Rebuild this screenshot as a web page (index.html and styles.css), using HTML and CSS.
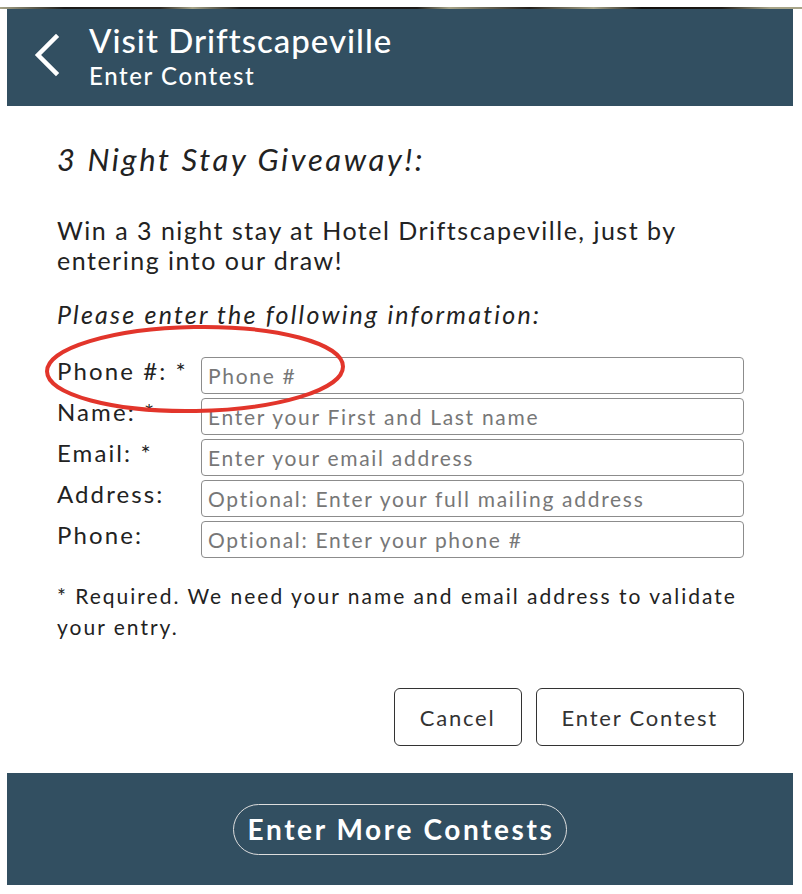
FILE: index.html
```html
<!DOCTYPE html>
<html lang="en">
<head>
    <meta charset="UTF-8">
    <meta name="viewport" content="width=device-width, initial-scale=1.0">
    <title>Enter Contest</title>
    <link rel="stylesheet" href="styles.css">
</head>
<body>
    <div class="page">
        <div class="top-strip"></div>

        <header class="header">
            <a href="#" class="back-link" aria-label="Back">
                <svg width="26" height="44" viewBox="0 0 26 44">
                    <polyline points="22,4 4,22 22,40" fill="none" stroke="#fff" stroke-width="4.5" stroke-linecap="square"/>
                </svg>
            </a>
            <div class="header-titles">
                <h1>Visit Driftscapeville</h1>
                <div class="subtitle">Enter Contest</div>
            </div>
        </header>

        <main class="content">
            <h2>3 Night Stay Giveaway!:</h2>
            <p class="intro">Win a 3 night stay at Hotel Driftscapeville, just by entering into our draw!</p>
            <p class="prompt">Please enter the following information:</p>

            <form class="entry-form" action="#" method="post">
                <svg class="highlight" width="310" height="96" viewBox="0 0 310 96">
                    <ellipse cx="155" cy="48" rx="148" ry="42" fill="none" stroke="#e2352b" stroke-width="4" transform="rotate(-1 155 48)"/>
                </svg>
                <label for="phone-req">Phone #: *</label>
                <input type="text" id="phone-req" placeholder="Phone #">
                <label for="name">Name: *</label>
                <input type="text" id="name" placeholder="Enter your First and Last name">
                <label for="email">Email: *</label>
                <input type="text" id="email" placeholder="Enter your email address">
                <label for="address">Address:</label>
                <input type="text" id="address" placeholder="Optional: Enter your full mailing address">
                <label for="phone">Phone:</label>
                <input type="text" id="phone" placeholder="Optional: Enter your phone #">
            </form>

            <p class="note">* Required. We need your name and email address to validate your entry.</p>

            <div class="actions">
                <button type="button" class="btn">Cancel</button>
                <button type="submit" class="btn">Enter Contest</button>
            </div>
        </main>

        <footer class="footer">
            <a href="#" class="pill">Enter More Contests</a>
        </footer>
    </div>
</body>
</html>
```

FILE: styles.css
```css
body {
    margin: 0;
    background-color: #fff;
    font-family: Lato, "Noto Sans", sans-serif;
    color: #222;
}

.page {
    margin: 0 9px 0 7px;
}

.top-strip {
    height: 2px;
    margin: 7px -9px 0 -7px;
    background: linear-gradient(90deg, #a7a488 0%, #1a1a18 8%, #2a2620 20%, #a7a488 24%, #171614 30%, #1c1a17 52%, #a7a488 56%, #211d18 66%, #a9a68a 74%, #120f0c 80%, #1d1a15 90%, #a7a488 96%);
}

.header {
    background-color: #324f61;
    height: 97px;
    display: flex;
    align-items: center;
    color: #fff;
}

.back-link {
    display: flex;
    margin: 0 29px 0 27px;
    padding-bottom: 6px;
}

.header-titles {
    padding-bottom: 2px;
}

.header-titles h1 {
    margin: 0;
    font-size: 33px;
    font-weight: 500;
    line-height: 36px;
    letter-spacing: 1px;
}

.header-titles .subtitle {
    margin-top: 3px;
    font-size: 24px;
    font-weight: 500;
    line-height: 30px;
    letter-spacing: 1.6px;
}

.content {
    padding: 35px 49px 27px 50px;
}

.content h2 {
    margin: 0;
    font-size: 31px;
    font-style: italic;
    font-weight: 400;
    line-height: 36px;
    letter-spacing: 2.6px;
}

.intro {
    margin: 38px 0 0;
    font-size: 25px;
    line-height: 30px;
    letter-spacing: 1.5px;
}

.prompt {
    margin: 24px 0 0;
    font-size: 25px;
    font-style: italic;
    line-height: 30px;
    letter-spacing: 2.2px;
}

.entry-form {
    position: relative;
    margin-top: 28px;
    display: grid;
    grid-template-columns: 144px 1fr;
    row-gap: 4px;
}

.entry-form label {
    font-size: 24px;
    line-height: 28px;
    letter-spacing: 2.1px;
}

.entry-form input {
    height: 37px;
    box-sizing: border-box;
    border: 1.5px solid #8c8c8c;
    border-radius: 4px;
    padding: 0 6px;
    font-family: inherit;
    font-size: 21px;
    letter-spacing: 1.7px;
    color: #222;
}

.entry-form input::placeholder {
    color: #777;
}

.highlight {
    position: absolute;
    left: -17px;
    top: -36px;
    pointer-events: none;
}

.note {
    margin: 22px 0 0;
    font-size: 21px;
    line-height: 31px;
    letter-spacing: 2px;
}

.actions {
    display: flex;
    justify-content: flex-end;
    gap: 14px;
    margin-top: 46px;
}

.btn {
    height: 58px;
    box-sizing: border-box;
    padding: 0 25px;
    background-color: #fff;
    border: 1.5px solid #333;
    border-radius: 6px;
    font-family: inherit;
    font-size: 22px;
    letter-spacing: 1.8px;
    color: #333;
}

.footer {
    background-color: #324f61;
    height: 112px;
    display: flex;
    align-items: center;
    justify-content: center;
}

.pill {
    display: inline-block;
    padding: 0 12px 0 14px;
    height: 51px;
    line-height: 49px;
    box-sizing: border-box;
    border: 1.5px solid #ddd;
    border-radius: 26px;
    color: #fff;
    font-size: 28px;
    font-weight: 700;
    letter-spacing: 2.6px;
    text-decoration: none;
}
```
